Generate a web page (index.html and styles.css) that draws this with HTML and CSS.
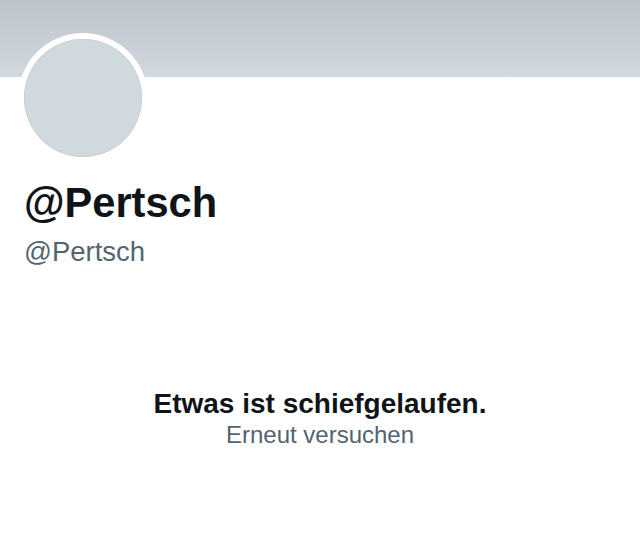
FILE: index.html
```html
<!DOCTYPE html>
<html>
<head>
	<meta charset="utf-8">
	<title>@Pertsch</title>
	<link rel="stylesheet" href="styles.css">
</head>
<body>
	<div class='banner'></div>
	<section class='perfil'>
		<div class='avatar'><div class='foto'></div></div>
		<div class='nombre'>@Pertsch</div>
		<div class='usuario'>@Pertsch</div>
	</section>
	<section class='error'>
		<div class='titulo'>Etwas ist schiefgelaufen.</div>
		<div class='reintentar'>Erneut versuchen</div>
	</section>
</body>
</html>
```

FILE: styles.css
```css
* {font-family: "Liberation Sans", Arial, sans-serif; box-sizing: border-box;}
body {margin: 0; background-color: white; width: 640px; height: 554px; overflow: hidden;}

.banner {
	height: 77px;
	background: linear-gradient(#bcc3cb, #d1d8de);
}

.perfil {padding-left: 18px;}

.avatar {
	width: 130px;
	height: 130px;
	margin-top: -44px;
	border-radius: 50%;
	background-color: white;
	padding: 6px;
}

.foto {
	width: 100%;
	height: 100%;
	border-radius: 50%;
	background-color: #cfd9de;
	box-shadow: inset 0 0 1px rgba(0,0,0,0.25);
}

.nombre {
	margin-top: 16px;
	margin-left: 6px;
	font-size: 41.6px;
	line-height: 48px;
	font-weight: bold;
	color: #0f1419;
}

.usuario {
	margin-top: 9px;
	margin-left: 6px;
	font-size: 27.5px;
	line-height: 32px;
	color: #536471;
}

.error {
	margin-top: 120px;
	text-align: center;
}

.titulo {
	font-size: 28px;
	line-height: 32px;
	font-weight: bold;
	color: #0f1419;
}

.reintentar {
	font-size: 24px;
	line-height: 30px;
	color: #536471;
}
```
